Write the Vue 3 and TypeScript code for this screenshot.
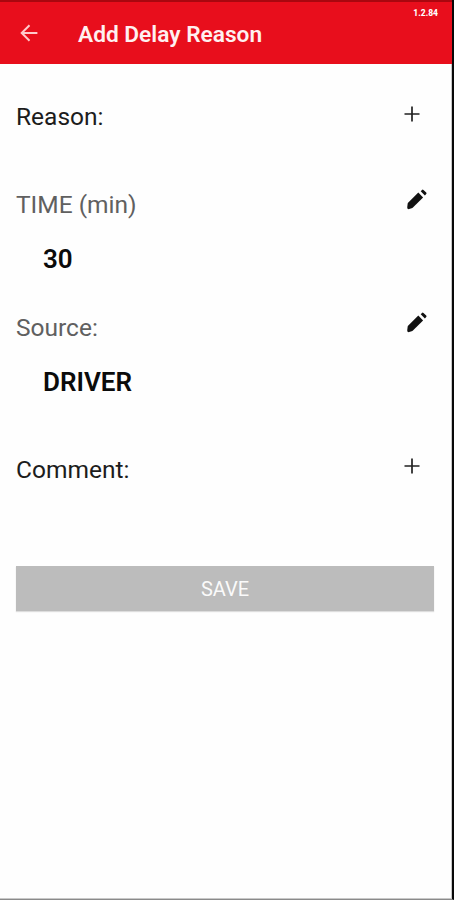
<template>
    <div class="screen">
        <header class="app-bar">
            <button class="icon-btn back" aria-label="Back">
                <svg width="18" height="18" viewBox="0 0 18 18">
                    <path d="M17.4 9H1.8M9.5 1.2L1.7 9l7.8 7.8" />
                </svg>
            </button>
            <h1 class="title">Add Delay Reason</h1>
            <span class="version">{{ version }}</span>
        </header>
        <main class="form">
            <section v-for="field in fields" :key="field.label" class="field" :class="field.name">
                <div class="row">
                    <span class="label" :class="{ filled: field.value }">{{ field.label }}</span>
                    <button class="icon-btn" :class="field.value ? 'edit' : 'add'" :aria-label="field.value ? 'Edit' : 'Add'">
                        <svg v-if="field.value" width="20" height="21" viewBox="0 0 20 21">
                            <path d="M11.3 3.6L16.1 8.4L5.4 19L2.2 20.1Q0.1 20.4 0.2 18.3L0.8 14.1Z" />
                            <path d="M13.7 2.2L15 0.9Q15.7 0.2 16.5 0.9L19.2 3.5Q20 4.3 19.2 5.1L17.9 6.4Z" />
                        </svg>
                        <svg v-else width="16" height="16" viewBox="0 0 16 16">
                            <path d="M8 0.5V15.5M0.5 8H15.5" />
                        </svg>
                    </button>
                </div>
                <div v-if="field.value" class="value">{{ field.value }}</div>
            </section>
            <button class="save">SAVE</button>
        </main>
    </div>
</template>
<script setup lang="ts">
interface Field {
    name: string
    label: string
    value?: string
}

const version = "1.2.84"

const fields: Field[] = [
    { name: "reason", label: "Reason:" },
    { name: "time", label: "TIME (min)", value: "30" },
    { name: "source", label: "Source:", value: "DRIVER" },
    { name: "comment", label: "Comment:" },
]
</script>
<style>
body {
    background: #fefefe;
}
</style>
<style scoped>
.screen {
    box-sizing: border-box;
    height: 900px;
    border-right: 2px solid #080808;
    border-bottom: 1px solid #8a8a8a;
    box-shadow: inset -1px -1px 0 #c8c8c8;
    background: #fefefe;
    font-family: Roboto, sans-serif;
    overflow: hidden;
}
.app-bar {
    box-sizing: border-box;
    display: flex;
    height: 64px;
    padding-left: 20px;
    border-top: 2px solid #a9070f;
    background: #e80e1c;
    color: #fff;
}
.icon-btn {
    display: block;
    flex: none;
    padding: 0;
    border: 0;
    background: none;
}
.icon-btn svg {
    display: block;
}
.back {
    width: 18px;
    height: 18px;
    margin-top: 22px;
}
.back path {
    fill: none;
    stroke: #ffc9cb;
    stroke-width: 2;
}
.title {
    margin: 19px 0 0 40px;
    font-size: 22.7px;
    line-height: 28px;
    font-weight: 600;
    color: #fff0f0;
    white-space: nowrap;
}
.version {
    margin: 6px 14px 0 auto;
    font-size: 8.5px;
    line-height: 11px;
    font-weight: 800;
}
.form {
    display: flex;
    flex-direction: column;
    padding: 38px 18px 0 16px;
}
.field {
    height: 88px;
}
.field.time {
    height: 123px;
}
.field.source {
    height: 141px;
}
.field.comment {
    height: 112px;
}
.row {
    display: flex;
    justify-content: space-between;
    height: 30px;
}
.label {
    font-size: 24.5px;
    line-height: 30px;
    color: #1c1c1c;
}
.label.filled {
    color: #606060;
}
.comment .label {
    padding-top: 1px;
}
.add {
    width: 16px;
    height: 16px;
    margin: 4px 14px 0 0;
}
.add path {
    stroke: #222;
    stroke-width: 1.7;
}
.edit {
    width: 20px;
    height: 21px;
    margin: -1px 7px 0 0;
}
.edit path {
    fill: #111;
}
.value {
    padding: 24px 0 0 27px;
    font-size: 26px;
    line-height: 30px;
    font-weight: 600;
    color: #0b0b0b;
}
.save {
    height: 45px;
    padding: 2px 0 0;
    border: 0;
    background: #bcbcbc;
    box-shadow: 0 1px 1px #ddd;
    color: #fafafa;
    font-family: inherit;
    font-size: 20px;
    line-height: 43px;
}
</style>
